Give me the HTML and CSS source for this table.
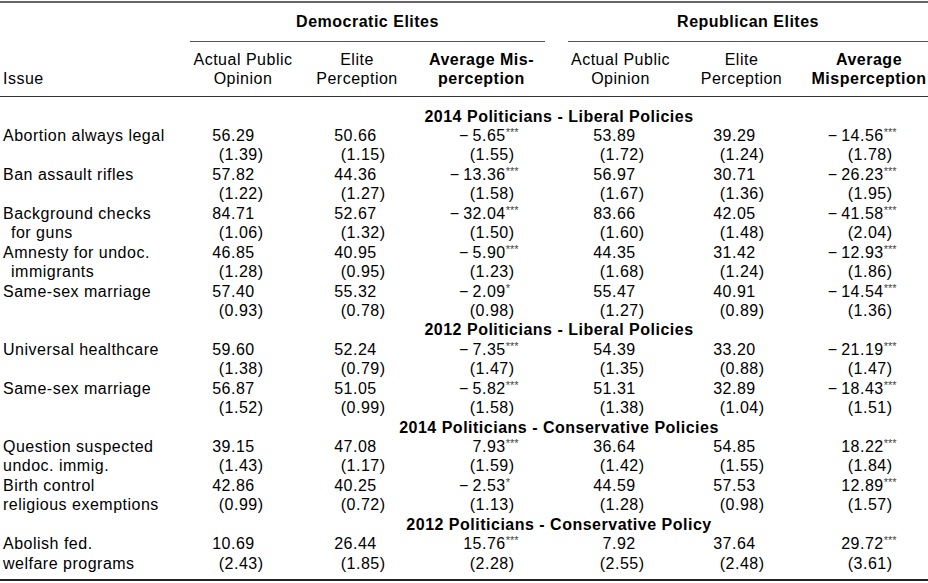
FILE: index.html
```html
<!DOCTYPE html>
<html>
<head>
<meta charset="utf-8">
<link rel="stylesheet" href="styles.css">
</head>
<body>
<div class="rule-top"></div>
<table class="tbl">
<colgroup>
<col class="w-issue"><col class="w-a"><col class="w-b"><col class="w-c"><col class="w-sp"><col class="w-d"><col class="w-e"><col class="w-f">
</colgroup>
<thead>
<tr class="grp">
<th></th>
<th colspan="3" class="grp-dem"><b>Democratic Elites</b></th>
<th></th>
<th colspan="3" class="grp-rep"><b>Republican Elites</b></th>
</tr>
<tr class="hdr">
<th class="issue-h">Issue</th>
<th>Actual Public<br>Opinion</th>
<th>Elite<br>Perception</th>
<th><b>Average Mis-<br>perception</b></th>
<th></th>
<th>Actual Public<br>Opinion</th>
<th>Elite<br>Perception</th>
<th><b>Average<br>Misperception</b></th>
</tr>
</thead>
<tbody>
<tr class="sec first"><td></td><td colspan="7">2014 Politicians - Liberal Policies</td></tr>
<tr class="v"><td>Abortion always legal</td><td><span class="i">56</span>.29</td><td><span class="i">50</span>.66</td><td><span class="i">−&#8201;5</span>.65<sup>***</sup></td><td></td><td><span class="i">53</span>.89</td><td><span class="i">39</span>.29</td><td><span class="i">−&#8201;14</span>.56<sup>***</sup></td></tr>
<tr class="s"><td></td><td><span class="i">(1</span>.39)</td><td><span class="i">(1</span>.15)</td><td><span class="i">(1</span>.55)</td><td></td><td><span class="i">(1</span>.72)</td><td><span class="i">(1</span>.24)</td><td><span class="i">(1</span>.78)</td></tr>
<tr class="v"><td>Ban assault rifles</td><td><span class="i">57</span>.82</td><td><span class="i">44</span>.36</td><td><span class="i">−&#8201;13</span>.36<sup>***</sup></td><td></td><td><span class="i">56</span>.97</td><td><span class="i">30</span>.71</td><td><span class="i">−&#8201;26</span>.23<sup>***</sup></td></tr>
<tr class="s"><td></td><td><span class="i">(1</span>.22)</td><td><span class="i">(1</span>.27)</td><td><span class="i">(1</span>.58)</td><td></td><td><span class="i">(1</span>.67)</td><td><span class="i">(1</span>.36)</td><td><span class="i">(1</span>.95)</td></tr>
<tr class="v"><td>Background checks</td><td><span class="i">84</span>.71</td><td><span class="i">52</span>.67</td><td><span class="i">−&#8201;32</span>.04<sup>***</sup></td><td></td><td><span class="i">83</span>.66</td><td><span class="i">42</span>.05</td><td><span class="i">−&#8201;41</span>.58<sup>***</sup></td></tr>
<tr class="s"><td class="ind">for guns</td><td><span class="i">(1</span>.06)</td><td><span class="i">(1</span>.32)</td><td><span class="i">(1</span>.50)</td><td></td><td><span class="i">(1</span>.60)</td><td><span class="i">(1</span>.48)</td><td><span class="i">(2</span>.04)</td></tr>
<tr class="v"><td>Amnesty for undoc.</td><td><span class="i">46</span>.85</td><td><span class="i">40</span>.95</td><td><span class="i">−&#8201;5</span>.90<sup>***</sup></td><td></td><td><span class="i">44</span>.35</td><td><span class="i">31</span>.42</td><td><span class="i">−&#8201;12</span>.93<sup>***</sup></td></tr>
<tr class="s"><td class="ind">immigrants</td><td><span class="i">(1</span>.28)</td><td><span class="i">(0</span>.95)</td><td><span class="i">(1</span>.23)</td><td></td><td><span class="i">(1</span>.68)</td><td><span class="i">(1</span>.24)</td><td><span class="i">(1</span>.86)</td></tr>
<tr class="v"><td>Same-sex marriage</td><td><span class="i">57</span>.40</td><td><span class="i">55</span>.32</td><td><span class="i">−&#8201;2</span>.09<sup>*</sup></td><td></td><td><span class="i">55</span>.47</td><td><span class="i">40</span>.91</td><td><span class="i">−&#8201;14</span>.54<sup>***</sup></td></tr>
<tr class="s"><td></td><td><span class="i">(0</span>.93)</td><td><span class="i">(0</span>.78)</td><td><span class="i">(0</span>.98)</td><td></td><td><span class="i">(1</span>.27)</td><td><span class="i">(0</span>.89)</td><td><span class="i">(1</span>.36)</td></tr>
<tr class="sec"><td></td><td colspan="7">2012 Politicians - Liberal Policies</td></tr>
<tr class="v"><td>Universal healthcare</td><td><span class="i">59</span>.60</td><td><span class="i">52</span>.24</td><td><span class="i">−&#8201;7</span>.35<sup>***</sup></td><td></td><td><span class="i">54</span>.39</td><td><span class="i">33</span>.20</td><td><span class="i">−&#8201;21</span>.19<sup>***</sup></td></tr>
<tr class="s"><td></td><td><span class="i">(1</span>.38)</td><td><span class="i">(0</span>.79)</td><td><span class="i">(1</span>.47)</td><td></td><td><span class="i">(1</span>.35)</td><td><span class="i">(0</span>.88)</td><td><span class="i">(1</span>.47)</td></tr>
<tr class="v"><td>Same-sex marriage</td><td><span class="i">56</span>.87</td><td><span class="i">51</span>.05</td><td><span class="i">−&#8201;5</span>.82<sup>***</sup></td><td></td><td><span class="i">51</span>.31</td><td><span class="i">32</span>.89</td><td><span class="i">−&#8201;18</span>.43<sup>***</sup></td></tr>
<tr class="s"><td></td><td><span class="i">(1</span>.52)</td><td><span class="i">(0</span>.99)</td><td><span class="i">(1</span>.58)</td><td></td><td><span class="i">(1</span>.38)</td><td><span class="i">(1</span>.04)</td><td><span class="i">(1</span>.51)</td></tr>
<tr class="sec"><td></td><td colspan="7">2014 Politicians - Conservative Policies</td></tr>
<tr class="v"><td>Question suspected</td><td><span class="i">39</span>.15</td><td><span class="i">47</span>.08</td><td><span class="i">7</span>.93<sup>***</sup></td><td></td><td><span class="i">36</span>.64</td><td><span class="i">54</span>.85</td><td><span class="i">18</span>.22<sup>***</sup></td></tr>
<tr class="s"><td>undoc. immig.</td><td><span class="i">(1</span>.43)</td><td><span class="i">(1</span>.17)</td><td><span class="i">(1</span>.59)</td><td></td><td><span class="i">(1</span>.42)</td><td><span class="i">(1</span>.55)</td><td><span class="i">(1</span>.84)</td></tr>
<tr class="v"><td>Birth control</td><td><span class="i">42</span>.86</td><td><span class="i">40</span>.25</td><td><span class="i">−&#8201;2</span>.53<sup>*</sup></td><td></td><td><span class="i">44</span>.59</td><td><span class="i">57</span>.53</td><td><span class="i">12</span>.89<sup>***</sup></td></tr>
<tr class="s"><td>religious exemptions</td><td><span class="i">(0</span>.99)</td><td><span class="i">(0</span>.72)</td><td><span class="i">(1</span>.13)</td><td></td><td><span class="i">(1</span>.28)</td><td><span class="i">(0</span>.98)</td><td><span class="i">(1</span>.57)</td></tr>
<tr class="sec"><td></td><td colspan="7">2012 Politicians - Conservative Policy</td></tr>
<tr class="v"><td>Abolish fed.</td><td><span class="i">10</span>.69</td><td><span class="i">26</span>.44</td><td><span class="i">15</span>.76<sup>***</sup></td><td></td><td><span class="i">7</span>.92</td><td><span class="i">37</span>.64</td><td><span class="i">29</span>.72<sup>***</sup></td></tr>
<tr class="s last"><td>welfare programs</td><td><span class="i">(2</span>.43)</td><td><span class="i">(1</span>.85)</td><td><span class="i">(2</span>.28)</td><td></td><td><span class="i">(2</span>.55)</td><td><span class="i">(2</span>.48)</td><td><span class="i">(3</span>.61)</td></tr>
</tbody>
</table>
</body>
</html>
```
FILE: styles.css
```css
* { box-sizing: border-box; }
html, body { margin: 0; padding: 0; background: #fff; }
body {
  color: #000;
  font-family: "Liberation Sans", Arial, sans-serif;
  font-size: 16px;
  letter-spacing: 0.5px;
}
.rule-top {
  margin-top: 1px;
  height: 2px;
  background: #666;
  width: 928px;
}
.tbl {
  width: 928px;
  table-layout: fixed;
  border-collapse: separate;
  border-spacing: 0;
}
.w-issue { width: 190px; }
.w-a { width: 106px; }
.w-b { width: 122px; }
.w-c { width: 127px; }
.w-sp { width: 23px; }
.w-d { width: 105px; }
.w-e { width: 137px; }
.w-f { width: 118px; }

th, td {
  padding: 0;
  line-height: 19.43px;
  white-space: nowrap;
  font-weight: normal;
  vertical-align: middle;
}
b { font-weight: bold; }

.grp th { padding-top: 9.3px; padding-bottom: 9.3px; text-align: center; }
.grp .grp-dem, .grp .grp-rep { border-bottom: 1px solid #555; }

.hdr th {
  text-align: center;
  padding-top: 7.6px;
  padding-bottom: 7.6px;
  border-bottom: 1px solid #333;
}
.hdr .issue-h { text-align: left; vertical-align: bottom; padding-left: 3px; }

.sec td { text-align: center; font-weight: bold; }
.first td { padding-top: 9.5px; }
.last td { padding-bottom: 5.5px; border-bottom: 2px solid #222; }

tbody td:first-child { padding-left: 3px; }
tbody td.ind { padding-left: 11px; }

.i { display: inline-block; width: 34px; text-align: right; }

.v td:nth-child(2) { padding-left: 7px; }
.v td:nth-child(3) { padding-left: 23px; }
.v td:nth-child(4) { padding-left: 30px; }
.v td:nth-child(6) { padding-left: 10px; }
.v td:nth-child(7) { padding-left: 25px; }
.v td:nth-child(8) { padding-left: 16px; }

.s td:nth-child(2) { padding-left: 10px; }
.s td:nth-child(3) { padding-left: 26px; }
.s td:nth-child(4) { padding-left: 33px; }
.s td:nth-child(6) { padding-left: 13px; }
.s td:nth-child(7) { padding-left: 28px; }
.s td:nth-child(8) { padding-left: 19px; }

sup {
  font-size: 11px;
  line-height: 0;
  vertical-align: 5px;
  letter-spacing: 0;
  color: #444;
}
```
